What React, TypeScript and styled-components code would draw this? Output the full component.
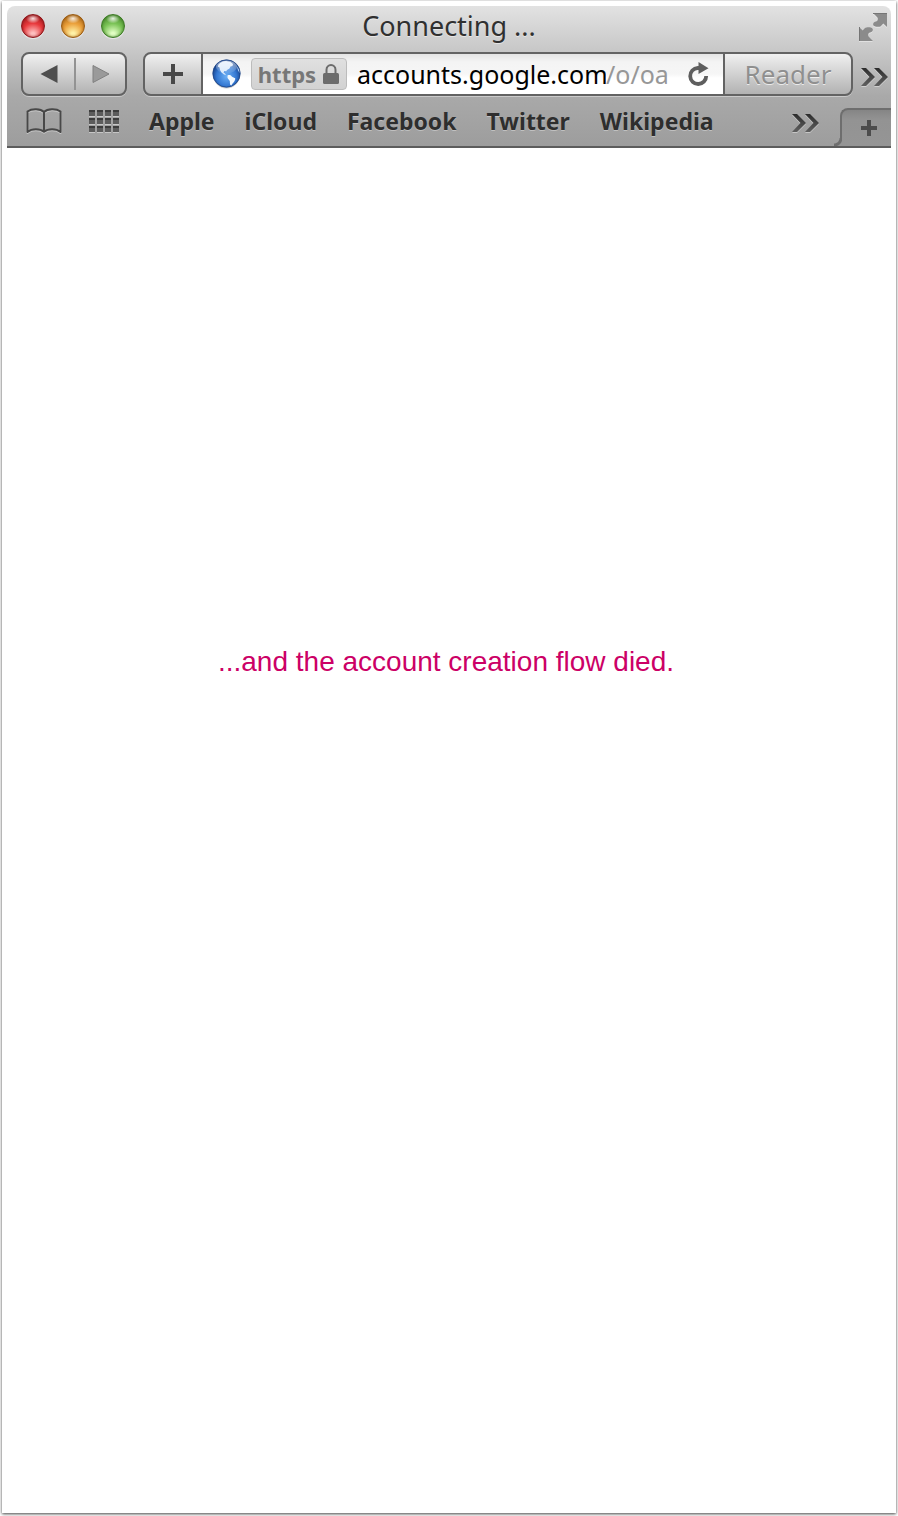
import React from "react";
import styled, { createGlobalStyle } from "styled-components";

const GlobalStyle = createGlobalStyle`
  *, *::before, *::after { box-sizing: border-box; }
  body { margin: 0; background: #ffffff; }
  button, input { font: inherit; margin: 0; }
`;

const UI_FONT = `"Noto Sans", "Open Sans", sans-serif`;

const Page = styled.div`
  min-height: 100vh;
  display: flex;
  padding: 1px 2px 3px;
  font-family: ${UI_FONT};
`;

const Frame = styled.div`
  flex: 1;
  min-width: 0;
  padding: 5px;
  background: #ffffff;
  box-shadow: 0 1px 3px rgba(0, 0, 0, 0.75);
`;

const Chrome = styled.header`
  border-bottom: 2px solid #5c5c5c;
  border-radius: 8px 8px 0 0;
  background: linear-gradient(#e2e2e2 0, #c8c8c8 44px, #a9a9a9 90px, #9d9d9d 140px);
`;

const TitleBar = styled.div`
  display: grid;
  grid-template-columns: 1fr auto 1fr;
  align-items: center;
  height: 40px;
  padding: 0 4px;
`;

const Lights = styled.div`
  display: flex;
  gap: 16px;
  padding-left: 10px;
`;

const Light = styled.button<{ $edge: string; $mid: string; $glow: string }>`
  width: 24px;
  height: 24px;
  padding: 0;
  border: 1px solid ${(p) => p.$edge};
  border-radius: 50%;
  background:
    radial-gradient(ellipse 7px 5px at 50% 16%, rgba(255, 255, 255, 0.85), rgba(255, 255, 255, 0) 100%),
    radial-gradient(circle at 50% 88%, ${(p) => p.$glow} 8%, ${(p) => p.$mid} 50%, ${(p) => p.$edge} 100%);
  box-shadow: inset 0 0 3px ${(p) => p.$edge}, 0 1px 1px rgba(255, 255, 255, 0.6);
`;

const Title = styled.h1`
  margin: 0;
  font-size: 27px;
  line-height: 36px;
  font-weight: 400;
  color: #303030;
  text-shadow: 0 1px 0 rgba(255, 255, 255, 0.5);
`;

const IconButton = styled.button`
  display: flex;
  align-items: center;
  justify-content: center;
  padding: 0;
  border: 0;
  background: none;
  filter: drop-shadow(0 1px 0 rgba(255, 255, 255, 0.4));
`;

const CornerButton = styled(IconButton)`
  justify-self: end;
  padding-top: 2px;
`;

const Toolbar = styled.div`
  display: flex;
  align-items: center;
  gap: 16px;
  padding: 6px 3px 0 14px;
`;

const Group = styled.div<{ $grow?: boolean }>`
  display: flex;
  flex: ${(p) => (p.$grow ? "1 1 0" : "none")};
  min-width: 0;
  height: 44px;
  border: 2px solid #636363;
  border-radius: 8px;
  overflow: hidden;
  background: linear-gradient(#f0f0f0, #b2b2b2);
  box-shadow: 0 1px 0 rgba(255, 255, 255, 0.4);
`;

const GroupButton = styled.button<{ $width: number }>`
  display: flex;
  flex: none;
  align-items: center;
  justify-content: center;
  width: ${(p) => p.$width}px;
  padding: 0;
  border: 0;
  background: none;
  color: #8f8f8f;
  font-size: 26px;
  line-height: 36px;
  text-shadow: 0 1px 0 rgba(255, 255, 255, 0.7);
`;

const Divider = styled.span`
  width: 2px;
  margin: 4px 0;
  background: #939393;
`;

const AddressArea = styled.div`
  display: flex;
  flex: 1;
  align-items: center;
  gap: 10px;
  min-width: 0;
  padding: 0 14px 0 9px;
  border: solid #636363;
  border-width: 0 2px;
  background: linear-gradient(#e4e4e4, #f4f4f4 8px, #f6f6f6 50%, #ffffff 60%);
`;

const SecureBadge = styled.span`
  display: flex;
  flex: none;
  align-items: center;
  justify-content: center;
  gap: 7px;
  width: 96px;
  height: 32px;
  padding-right: 1px;
  border: 1px solid #bcbcbc;
  border-radius: 4px;
  background: linear-gradient(#e0e0e0, #d2d2d2);
  color: #777777;
  font-size: 22px;
  line-height: 28px;
  font-weight: 700;
`;

const Url = styled.div`
  display: flex;
  flex: 1;
  min-width: 0;
  overflow: hidden;
  color: #979797;
  font-size: 25px;
  line-height: 36px;
  white-space: nowrap;
`;

const UrlInput = styled.input`
  flex: none;
  width: 249px;
  height: 36px;
  padding: 0;
  border: 0;
  outline: 0;
  background: none;
  color: #000000;
`;

const OverflowButton = styled(IconButton)`
  width: 27px;
  margin-left: -8px;
  padding-top: 5px;
`;

const BookmarksBar = styled.nav`
  display: flex;
  align-items: center;
  height: 50px;
  padding-left: 19px;
`;

const BookmarkTools = styled.div`
  display: flex;
  align-items: center;
  gap: 27px;
  margin-right: 30px;
`;

const Bookmarks = styled.div`
  display: flex;
  flex: 1;
  gap: 30px;
  min-width: 0;
`;

const Bookmark = styled.a`
  color: #2e2e2e;
  font-size: 23px;
  line-height: 32px;
  font-weight: 700;
  text-decoration: none;
  text-shadow: 0 1px 0 rgba(255, 255, 255, 0.35);
`;

const MoreBookmarks = styled(IconButton)`
  padding-top: 4px;
`;

const NewTab = styled.button`
  position: relative;
  align-self: flex-end;
  display: flex;
  align-items: center;
  justify-content: center;
  width: 51px;
  height: 38px;
  margin-left: 21px;
  padding: 0 0 0 5px;
  border: solid #6e6e6e;
  border-width: 2px 0 0 2px;
  border-radius: 8px 0 0 0;
  background: linear-gradient(#858585, #939393 10px, #959595);

  &::before {
    content: "";
    position: absolute;
    right: 100%;
    bottom: 0;
    width: 8px;
    height: 8px;
    background: radial-gradient(circle at 0 0, #9f9f9f 5px, #6e6e6e 6px, #6e6e6e 8px, #959595 9px);
  }
`;

const Content = styled.main`
  padding: 498px 6px 0 0;
`;

const Message = styled.p`
  margin: 0;
  color: #cc0066;
  font-family: "Liberation Sans", Arial, sans-serif;
  font-size: 28px;
  line-height: 32px;
  text-align: center;
`;

const Chevrons = () => (
  <svg width="27" height="20" viewBox="0 0 27 20" aria-hidden="true">
    <defs>
      <linearGradient id="chev" x1="0" y1="0" x2="0" y2="1">
        <stop offset="0" stopColor="#2c2c2c" />
        <stop offset="1" stopColor="#606060" />
      </linearGradient>
    </defs>
    <path
      d="M0 1H5L14 10L5 19H0L8.5 10ZM13 1H18L27 10L18 19H13L21.500 10Z"
      fill="url(#chev)"
    />
  </svg>
);

const ARROW =
  "M14 0H28V14L24.300 10.500L22 13C21 14 17.500 14 16.300 13.600C14.500 13 13.800 12 14.200 10.800C14.600 9.400 15.600 9 17 8.600C18.800 8 19.200 6.500 18.600 4.800L17.500 3.500Z";

const Fullscreen = () => (
  <svg width="28" height="28" viewBox="0 0 28 28" aria-hidden="true">
    <g fill="#8b8b8b">
      <path d={ARROW} />
      <path d={ARROW} transform="rotate(180 14 14)" />
    </g>
    <path d="M14 .5H28M.5 28V14" stroke="#757575" strokeWidth="1" fill="none" />
  </svg>
);

const Triangle = ({ forward = false }: { forward?: boolean }) => (
  <svg width="18" height="20" viewBox="0 0 18 20" aria-hidden="true">
    {forward ? (
      <path d="M1 1.500L17 10L1 18.500Z" fill="#9a9a9a" stroke="#808080" strokeWidth="1" />
    ) : (
      <path d="M17.500 1V19L.5 10Z" fill="#4e4e4e" />
    )}
  </svg>
);

const Plus = ({ size, stroke, color }: { size: number; stroke: number; color: string }) => (
  <svg width={size} height={size} viewBox={`0 0 ${size} ${size}`} aria-hidden="true">
    <path d={`M${size / 2} 0V${size}M0 ${size / 2}H${size}`} stroke={color} strokeWidth={stroke} />
  </svg>
);

const Globe = () => (
  <svg width="29" height="30" viewBox="0 0 29 30" aria-hidden="true">
    <defs>
      <radialGradient id="sea" cx=".5" cy=".6" r=".55">
        <stop offset="0" stopColor="#6cb0f6" />
        <stop offset=".65" stopColor="#3478d2" />
        <stop offset="1" stopColor="#153f88" />
      </radialGradient>
      <linearGradient id="shine" x1="0" y1="0" x2="0" y2="1">
        <stop offset="0" stopColor="#fff" stopOpacity=".6" />
        <stop offset="1" stopColor="#fff" stopOpacity=".05" />
      </linearGradient>
    </defs>
    <ellipse cx="14.500" cy="16" rx="13.500" ry="13.500" fill="#000" opacity=".2" />
    <circle cx="14.500" cy="14.500" r="13.700" fill="url(#sea)" stroke="#1d4485" strokeWidth=".8" />
    <path
      d="M6.500 5.500C8.500 3 11 2 14 1.900L18.500 3L21 5L20.500 7L18.500 7.500L17.500 9.500L15 11L14.300 12.300L12.300 12L11.500 13.500L13 14.500L14 16L12 15.500L9.500 13.500L8 11L7.500 8.500L5.800 7.500Z"
      fill="#d9e9fb"
    />
    <path
      d="M15.500 16.500C17.500 15.500 19 16.200 20 17.700L23.200 19.200C23.500 21.500 21.800 23.200 20.600 24.500L19.300 26.500L18 25.500L17.800 22L15.500 19Z"
      fill="#f3f9ff"
    />
    <path d="M24.500 6.500L27 10.500L27.600 14L26 11.500Z" fill="#a9cbf2" />
    <ellipse cx="14.500" cy="8" rx="10.500" ry="6.500" fill="url(#shine)" />
  </svg>
);

const Lock = () => (
  <svg width="16" height="20" viewBox="0 0 16 20" aria-hidden="true">
    <path d="M3.500 10V5.800a4.500 4.800 0 0 1 9 0V10" fill="none" stroke="#6c6c6c" strokeWidth="2" />
    <rect x="0" y="9" width="16" height="11" rx="1.500" fill="#6c6c6c" />
  </svg>
);

const Reload = () => (
  <svg width="21" height="25" viewBox="0 0 21 25" aria-hidden="true">
    <path d="M11 6H9.800A8 8 0 1 0 18.200 14" fill="none" stroke="#5e5e5e" strokeWidth="3.800" />
    <path d="M10.500 0L20.500 6.200L10.500 12Z" fill="#5e5e5e" />
  </svg>
);

const Book = () => (
  <svg width="36" height="26" viewBox="0 0 36 26" aria-hidden="true">
    <path
      d="M18 4C14.500 .6 6 .2 1.500 3.500V24C6 20.300 14 20.500 18 23.800C22 20.500 30 20.300 34.500 24V3.500C30 .2 21.500 .6 18 4ZM18 4V23.500"
      fill="none"
      stroke="#484848"
      strokeWidth="2"
      strokeLinejoin="round"
    />
  </svg>
);

const TopSites = () => (
  <svg width="30" height="22" viewBox="0 0 30 22" aria-hidden="true">
    {[0, 8, 16].map((y) =>
      [0, 8, 16, 24].map((x) => (
        <g key={`${x}-${y}`}>
          <rect x={x} y={y} width="6" height="6" fill="#5c5c5c" />
          <rect x={x} y={y} width="6" height="2" fill="#3c3c3c" />
        </g>
      ))
    )}
  </svg>
);

const bookmarks = ["Apple", "iCloud", "Facebook", "Twitter", "Wikipedia"];

export default function App() {
  return (
    <Page>
      <GlobalStyle />
      <Frame>
        <Chrome>
          <TitleBar>
            <Lights>
              <Light aria-label="Close" $edge="#8e1519" $mid="#e8393c" $glow="#ffc0c0" />
              <Light aria-label="Minimize" $edge="#9a5a10" $mid="#eba03a" $glow="#fff3a8" />
              <Light aria-label="Zoom" $edge="#3c7a24" $mid="#79c255" $glow="#e2ffc4" />
            </Lights>
            <Title>Connecting ...</Title>
            <CornerButton aria-label="Full screen">
              <Fullscreen />
            </CornerButton>
          </TitleBar>
          <Toolbar>
            <Group>
              <GroupButton $width={51} aria-label="Back">
                <Triangle />
              </GroupButton>
              <Divider />
              <GroupButton $width={49} aria-label="Forward" disabled>
                <Triangle forward />
              </GroupButton>
            </Group>
            <Group $grow>
              <GroupButton $width={56} aria-label="Add bookmark">
                <Plus size={20} stroke={4} color="#484848" />
              </GroupButton>
              <AddressArea>
                <Globe />
                <SecureBadge>
                  https
                  <Lock />
                </SecureBadge>
                <Url>
                  <UrlInput aria-label="Address" defaultValue="accounts.google.com" />
                  <span>/o/oa</span>
                </Url>
                <IconButton aria-label="Reload">
                  <Reload />
                </IconButton>
              </AddressArea>
              <GroupButton $width={126} disabled>
                Reader
              </GroupButton>
            </Group>
            <OverflowButton aria-label="More tools">
              <Chevrons />
            </OverflowButton>
          </Toolbar>
          <BookmarksBar aria-label="Bookmarks">
            <BookmarkTools>
              <IconButton aria-label="Show all bookmarks">
                <Book />
              </IconButton>
              <IconButton aria-label="Top sites">
                <TopSites />
              </IconButton>
            </BookmarkTools>
            <Bookmarks>
              {bookmarks.map((name) => (
                <Bookmark key={name} href="#">
                  {name}
                </Bookmark>
              ))}
            </Bookmarks>
            <MoreBookmarks aria-label="More bookmarks">
              <Chevrons />
            </MoreBookmarks>
            <NewTab aria-label="New tab">
              <Plus size={16} stroke={4} color="#4c4c4c" />
            </NewTab>
          </BookmarksBar>
        </Chrome>
        <Content>
          <Message>...and the account creation flow died.</Message>
        </Content>
      </Frame>
    </Page>
  );
}
